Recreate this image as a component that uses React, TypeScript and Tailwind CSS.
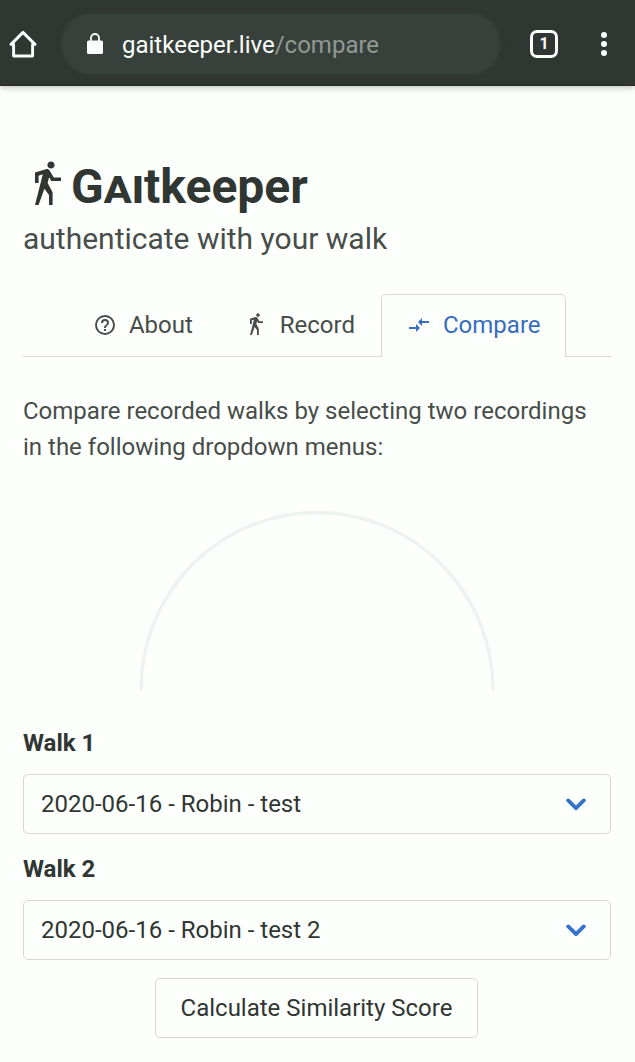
import React from "react";

const WALK =
  "M14.12,10H19V8.2H15.38L13.38,4.87C13.08,4.37 12.54,4.03 11.92,4.03C11.74,4.03 11.58,4.06 11.42,4.11L6,5.8V11H7.8V7.33L9.91,6.67L6,22H7.8L10.67,13.89L13,17V22H14.8V15.59L12.31,11.05L13.04,8.18M14,3.8C15,3.8 15.8,3 15.8,2C15.8,1 15,0.2 14,0.2C13,0.2 12.2,1 12.2,2C12.2,3 13,3.8 14,3.8Z";
const HELP =
  "M11,18H13V16H11V18M12,2A10,10 0 0,0 2,12A10,10 0 0,0 12,22A10,10 0 0,0 22,12A10,10 0 0,0 12,2M12,20C7.59,20 4,16.41 4,12C4,7.59 7.59,4 12,4C16.41,4 20,7.59 20,12C20,16.41 16.41,20 12,20M12,6A4,4 0 0,0 8,10H10A2,2 0 0,1 12,8A2,2 0 0,1 14,10C14,12 11,11.75 11,15H13C13,12.75 16,12.5 16,10A4,4 0 0,0 12,6Z";
const COMPARE = "M9.01 14H2v2h7.01v3L13 15l-3.99-4v3zm5.98-1v-3H22V8h-7.01V5L11 9l3.99 4z";

function Icon({ d, className }: { d: string; className: string }) {
  return (
    <svg viewBox="0 0 24 24" fill="currentColor" className={className}>
      <path d={d} />
    </svg>
  );
}

function BrowserBar() {
  return (
    <header className="flex h-[86px] shrink-0 items-center border-b border-[#262a27] bg-[#303632] pt-[3px] text-[#fbfffb] shadow-[0_2px_6px_rgba(50,60,50,0.28)]">
      <svg viewBox="0 0 28 28" className="ml-[9px] h-7 w-7 shrink-0" fill="none" stroke="currentColor" strokeWidth="2.9" strokeLinejoin="round" strokeLinecap="round">
        <path d="M2 14.4 L14 2.4 L26 14.4 H23.6 V26 H4.6 V14.4 Z" />
      </svg>
      <div className="ml-[25px] flex h-[60px] w-[438px] items-center rounded-full bg-[#38403b] pl-[24px] shadow-[0_0_5px_#38403b]">
        <svg viewBox="0 0 18 22" className="h-[22px] w-[18px] shrink-0">
          <rect x="1" y="7.5" width="16" height="13.5" rx="1.5" fill="currentColor" />
          <path d="M5 9 V5 a4 4 0 0 1 8 0 V9" fill="none" stroke="currentColor" strokeWidth="1.8" />
        </svg>
        <span className="ml-[18px] whitespace-nowrap pt-[2px] text-[24px] leading-7">
          gaitkeeper.live<span className="text-[#919994]">/compare</span>
        </span>
      </div>
      <div className="ml-[30px] flex h-[28px] w-[28px] items-center justify-center rounded-[7px] border-[3px] border-current text-[16px] font-bold leading-none">
        1
      </div>
      <div className="ml-[43px] flex flex-col gap-[3px]">
        <i className="h-[6px] w-[6px] rounded-full bg-current" />
        <i className="h-[6px] w-[6px] rounded-full bg-current" />
        <i className="h-[6px] w-[6px] rounded-full bg-current" />
      </div>
    </header>
  );
}

function Select({ label, value }: { label: string; value: string }) {
  return (
    <div className="flex flex-col">
      <span className="text-[24px] font-bold leading-9 text-[#303632]">{label}</span>
      <div className="mt-[13px] flex h-[60px] items-center justify-between rounded-[5px] border-[1.5px] border-[#d3dad5] pl-[17px] pr-[24px] text-[24px] text-[#303632]">
        <span>{value}</span>
        <svg viewBox="0 0 20 13" className="h-[13px] w-5" fill="none" stroke="#3571cd" strokeWidth="3.8" strokeLinecap="round" strokeLinejoin="round">
          <path d="M2.2 2.4 L10 10.2 L17.8 2.4" />
        </svg>
      </div>
    </div>
  );
}

export default function App() {
  return (
    <div className="flex h-[1062px] w-[635px] flex-col overflow-hidden bg-[#fdfffd] font-['Roboto',sans-serif] text-[#474d49]">
      <BrowserBar />
      <main className="flex flex-col pl-[23px] pr-6 pt-[72px]">
        <h1 className="flex h-[54px] items-center text-[48px] font-bold leading-[54px] text-[#303632]">
          <Icon d={WALK} className="h-12 w-12 shrink-0" />
          <span className="pt-[4px]">
            G<span className="[font-variant:small-caps]">ai</span>tkeeper
          </span>
        </h1>
        <p className="mt-[8px] text-[30px] leading-[38px]">authenticate with your walk</p>

        <nav className="mt-[36px] flex h-[63px] text-[24px]">
          <div className="flex flex-1 items-center justify-end border-b-[1.5px] border-[#d6dcd8]">
            <Icon d={HELP} className="h-6 w-6" />
            <span className="ml-[12px]">About</span>
            <Icon d={WALK} className="ml-[51px] h-6 w-6" />
            <span className="ml-[12px] mr-[26px]">Record</span>
          </div>
          <div className="flex w-[185px] items-center rounded-t-[5px] border-[1.5px] border-b-0 border-[#d3dad5] pb-[2px] pl-[25px] text-[#366dbe]">
            <Icon d={COMPARE} className="h-6 w-6" />
            <span className="ml-[12px]">Compare</span>
          </div>
          <div className="w-[45px] border-b-[1.5px] border-[#d6dcd8]" />
        </nav>

        <p className="mt-[36px] whitespace-nowrap text-[24px] leading-9">
          Compare recorded walks by selecting two recordings
          <br />
          in the following dropdown menus:
        </p>

        <svg viewBox="0 0 360 180" className="ml-[114px] mt-[45px] h-[180px] w-[360px]" fill="none" stroke="#edf3ee" strokeWidth="3.5">
          <path d="M4 180 A176 177.5 0 0 1 356 180" />
        </svg>

        <div className="mt-[35px] flex flex-col gap-[17px]">
          <Select label="Walk 1" value="2020-06-16 - Robin - test" />
          <Select label="Walk 2" value="2020-06-16 - Robin - test 2" />
        </div>
        <button className="ml-[132px] mt-[18px] h-[60px] w-[323px] rounded-[5px] border-[1.5px] border-[#d3dad5] text-[24px] text-[#303632]">
          Calculate Similarity Score
        </button>
      </main>
    </div>
  );
}
